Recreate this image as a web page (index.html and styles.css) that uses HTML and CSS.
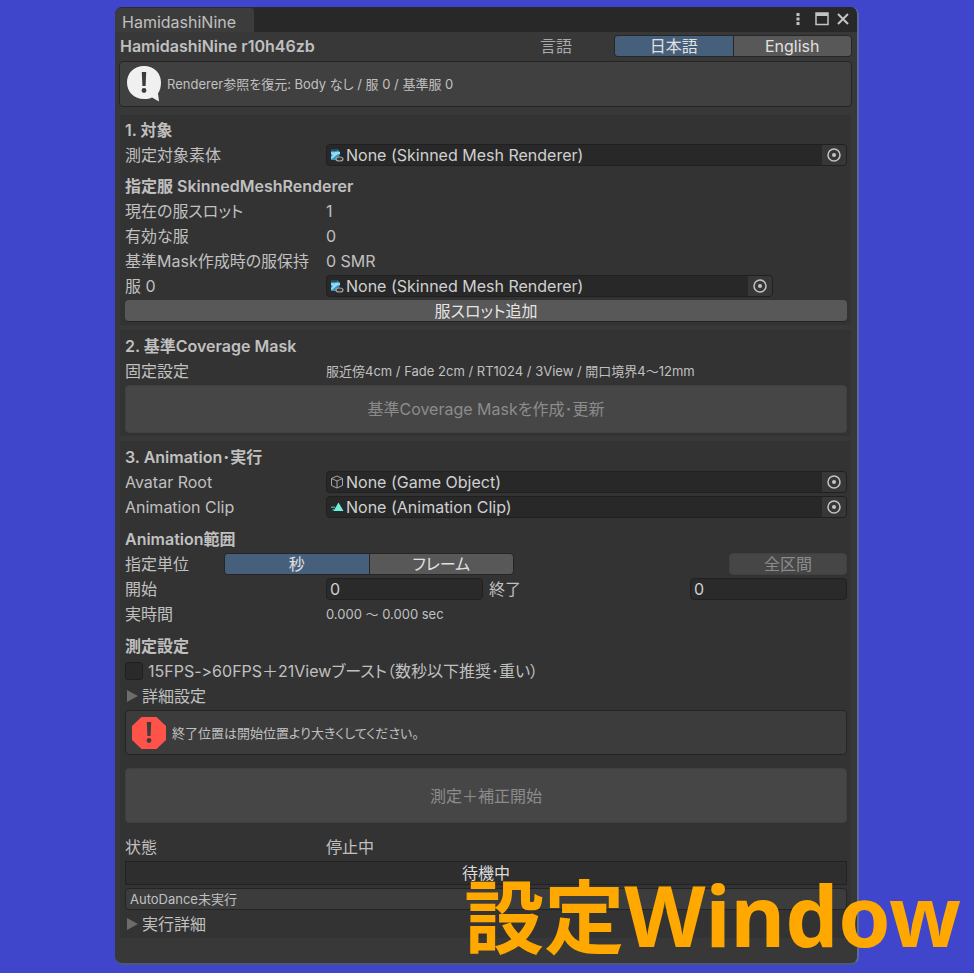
FILE: index.html
```html
<!DOCTYPE html>
<html lang="ja">
<head>
    <meta charset="utf-8">
    <meta name="viewport" content="width=device-width, initial-scale=1">
    <title>HamidashiNine</title>
    <link rel="stylesheet" href="styles.css">
</head>
<body>
    <!-- shared icons -->
    <svg class="sprite" aria-hidden="true">
        <symbol id="picker" viewBox="0 0 16 16">
            <circle cx="8" cy="8" r="6" fill="none" stroke="#c4c4c4" stroke-width="1.5"/>
            <circle cx="8" cy="8" r="2" fill="#c4c4c4"/>
        </symbol>
        <symbol id="mesh" viewBox="0 0 14 14">
            <path d="M1 1h6l3 3v2L7 12H1z" fill="#3a8fb5"/>
            <path d="M1 4c4 1 5-1 9 0v2C6 6 6 9 1 11V9c2-1 2-3 0-3z" fill="#8edcf8"/>
            <path d="M1 1h6v2H1z" fill="#2c4a58"/>
            <ellipse cx="9.500" cy="11" rx="3.500" ry="2" fill="#333" stroke="#a4a4a4" stroke-width="1.200"/>
        </symbol>
    </svg>

    <div class="window">
        <header class="titlebar">
            <span class="tab">HamidashiNine</span>
            <div class="window-buttons">
                <button type="button" aria-label="メニュー">
                    <svg width="6" height="14" viewBox="0 0 6 14"><path d="M1.500 1h3v3h-3zM1.500 5.500h3v3h-3zM1.500 10h3v3h-3z" fill="#c4c4c4"/></svg>
                </button>
                <button type="button" aria-label="最大化">
                    <svg width="14" height="14" viewBox="0 0 14 14"><path d="M1 1h12v11.500H1z" fill="none" stroke="#c4c4c4" stroke-width="1.500"/><path d="M1 1h12v3H1z" fill="#c4c4c4"/></svg>
                </button>
                <button type="button" aria-label="閉じる">
                    <svg width="12" height="14" viewBox="0 0 12 14"><path d="M1 2l10 10M11 2L1 12" stroke="#c4c4c4" stroke-width="2"/></svg>
                </button>
            </div>
        </header>

        <main>
            <div class="toolbar">
                <h1>HamidashiNine r10h46zb</h1>
                <span class="lang-label">言語</span>
                <div class="segment lang">
                    <button type="button" class="active">日本語</button>
                    <button type="button">English</button>
                </div>
            </div>

            <div class="help info">
                <svg width="36" height="36" viewBox="0 0 36 36">
                    <path d="M18 0C8 0 1 7 1 16.500S8 33 18 33c3 0 6-.5 8-1.500l7 4-1-8c2-3 3-7 3-11C35 7 28 0 18 0z" fill="#f0f0f0"/>
                    <path d="M15.800 6h4.400l-.6 14h-3.200z" fill="#3c3c3c"/>
                    <circle cx="18" cy="24.500" r="2.400" fill="#3c3c3c"/>
                </svg>
                <p>Renderer参照を復元: Body なし / 服 0 / 基準服 0</p>
            </div>

            <section>
                <h2>1. 対象</h2>
                <div class="row">
                    <label for="body">測定対象素体</label>
                    <div class="object-field">
                        <svg width="14" height="14"><use href="#mesh"/></svg>
                        <input id="body" type="text" value="None (Skinned Mesh Renderer)" readonly>
                        <button type="button" aria-label="選択"><svg width="16" height="16"><use href="#picker"/></svg></button>
                    </div>
                </div>
                <h3>指定服 SkinnedMeshRenderer</h3>
                <div class="row"><span>現在の服スロット</span><span>1</span></div>
                <div class="row"><span>有効な服</span><span>0</span></div>
                <div class="row"><span>基準Mask作成時の服保持</span><span>0 SMR</span></div>
                <div class="row">
                    <label for="cloth">服 0</label>
                    <div class="object-field slot">
                        <svg width="14" height="14"><use href="#mesh"/></svg>
                        <input id="cloth" type="text" value="None (Skinned Mesh Renderer)" readonly>
                        <button type="button" aria-label="選択"><svg width="16" height="16"><use href="#picker"/></svg></button>
                    </div>
                </div>
                <button type="button" class="btn">服スロット追加</button>
            </section>

            <section>
                <h2>2. 基準Coverage Mask</h2>
                <div class="row"><span>固定設定</span><span class="small">服近傍4cm / Fade 2cm / RT1024 / 3View / 開口境界4～12mm</span></div>
                <button type="button" class="btn big" disabled>基準Coverage Maskを作成･更新</button>
            </section>

            <section class="run">
                <h2>3. Animation･実行</h2>
                <div class="row">
                    <label for="avatar">Avatar Root</label>
                    <div class="object-field">
                        <svg width="14" height="14" viewBox="0 0 14 14"><path d="M7 1l5.500 2.500v7L7 13l-5.500-2.500v-7zM1.500 3.500L7 6l5.500-2.500M7 6v7" fill="none" stroke="#a8a8a8"/></svg>
                        <input id="avatar" type="text" value="None (Game Object)" readonly>
                        <button type="button" aria-label="選択"><svg width="16" height="16"><use href="#picker"/></svg></button>
                    </div>
                </div>
                <div class="row">
                    <label for="clip">Animation Clip</label>
                    <div class="object-field">
                        <svg width="14" height="14" viewBox="0 0 14 14"><path d="M8.500 2.500L13.500 11H3.500z" fill="#6ff0d8"/><path d="M1 6.500h4v1.500H1zM2.500 9H4v1.500H2.500z" fill="#3f9f90"/></svg>
                        <input id="clip" type="text" value="None (Animation Clip)" readonly>
                        <button type="button" aria-label="選択"><svg width="16" height="16"><use href="#picker"/></svg></button>
                    </div>
                </div>

                <h3>Animation範囲</h3>
                <div class="row unit">
                    <span>指定単位</span>
                    <div class="segment">
                        <button type="button" class="active">秒</button>
                        <button type="button">フレーム</button>
                    </div>
                    <button type="button" class="btn all" disabled>全区間</button>
                </div>
                <div class="range">
                    <div class="row"><label for="start">開始</label><input id="start" class="number" type="text" value="0"></div>
                    <div class="row"><label for="end">終了</label><input id="end" class="number" type="text" value="0"></div>
                </div>
                <div class="row"><span>実時間</span><span class="small">0.000 ～ 0.000 sec</span></div>

                <h3>測定設定</h3>
                <div class="check">
                    <input id="boost" type="checkbox">
                    <label for="boost">15FPS-&gt;60FPS＋21Viewブースト（数秒以下推奨･重い）</label>
                </div>
                <details>
                    <summary>詳細設定</summary>
                </details>
                <div class="help error">
                    <svg width="36" height="34" viewBox="0 0 36 34">
                        <path d="M10.500 1h15L35 10v14l-9.500 9h-15L1 24V10z" fill="#ff534a"/>
                        <path d="M15.800 6h4.400l-.6 14h-3.200z" fill="#3c3c3c"/>
                        <circle cx="18" cy="24.500" r="2.400" fill="#3c3c3c"/>
                    </svg>
                    <p>終了位置は開始位置より大きくしてください。</p>
                </div>
                <button type="button" class="btn start" disabled>測定＋補正開始</button>
                <div class="row"><span>状態</span><span>停止中</span></div>
                <div class="progress">待機中</div>
                <div class="status">AutoDance未実行</div>
                <details>
                    <summary>実行詳細</summary>
                </details>
            </section>
        </main>
    </div>

    <p class="caption"><span>設定</span>Window</p>
</body>
</html>
```
FILE: styles.css
```css
* {
    box-sizing: border-box;
}
body {
    position: relative;
    margin: 0;
    padding: 7px 115px 8px;
    background: #3f46cc;
    color: #c0c0c0;
    font-family: Inter, "Noto Sans CJK JP", sans-serif;
    font-size: 16px;
    line-height: 22px;
    font-feature-settings: "palt", "calt" 0;
}
h1, h2, h3, p {
    margin: 0;
    font-size: 16px;
}
h1, h2, h3 {
    font-weight: 600;
}
button, input {
    margin: 0;
    padding: 0;
    border: 0;
    background: none;
    color: inherit;
    font: inherit;
    font-feature-settings: inherit;
}
svg {
    display: block;
    flex: none;
}
.sprite {
    position: absolute;
    width: 0;
    height: 0;
}
.window {
    border-right: 2px solid #5a6a9c;
    border-bottom: 2px solid #4c5878;
    border-radius: 8px;
    background: #383838;
    overflow: hidden;
}

/* title bar */
.titlebar {
    display: flex;
    justify-content: space-between;
    height: 25px;
    background: #282828;
}
.tab {
    padding: 3px 18px 0 7px;
    border-top: 1px solid #2c2c2c;
    border-radius: 6px 4px 0 0;
    background: #3c3c3c;
}
.window-buttons {
    display: flex;
    align-items: center;
    gap: 8px;
    padding: 0 8px 2px 0;
}
.window-buttons button:first-child {
    margin-right: 6px;
}
main {
    padding: 2px 5px 25px 4px;
}
.toolbar {
    display: flex;
    align-items: center;
    height: 24px;
    margin-bottom: 3px;
}
.toolbar h1 {
    flex: 1;
    padding-left: 1px;
}
.lang-label {
    width: 74px;
    color: #aaa;
}

/* buttons */
.segment {
    display: flex;
    border: 1px solid #262626;
    border-radius: 4px;
    background: #262626;
    gap: 1px;
    overflow: hidden;
}
.segment button {
    flex: 1;
    height: 20px;
    line-height: 20px;
    background: #585858;
    color: #e0e0e0;
}
.segment .active {
    background: #46607c;
}
.lang {
    width: 238px;
}
.btn {
    display: block;
    width: 100%;
    height: 22px;
    border-bottom: 1px solid #242424;
    border-radius: 4px;
    background: #585858;
    color: #e4e4e4;
    line-height: 20px;
}
.btn:disabled {
    border: 1px solid #404040;
    background: #464646;
    color: #8c8c8c;
}
.big {
    height: 48px;
}

/* message boxes */
.help {
    display: flex;
    align-items: center;
    height: 46px;
    padding-left: 6px;
    gap: 5px;
    border: 1px solid #242424;
    border-radius: 4px;
    background: #404040;
}
.help p, .small, .status {
    font-size: 13px;
}
.info {
    margin-bottom: 8px;
}
.error {
    height: 45px;
    padding-left: 5px;
    background: #3c3c3c;
}

/* sections */
section {
    display: flex;
    flex-direction: column;
    gap: 3px;
    margin: 0 1px 5px;
    padding: 4px 4px 3px 5px;
    background: #333;
}
section + section {
    padding-top: 5px;
}
section:last-child {
    margin-bottom: 0;
}
h3 {
    margin-top: 6px;
}
.run h3 {
    margin-top: 7px;
}
.row {
    display: grid;
    grid-template-columns: 201px 1fr;
    align-items: center;
    height: 22px;
}
.object-field {
    display: flex;
    align-items: center;
    height: 22px;
    padding-left: 3px;
    border: 1px solid #202020;
    border-radius: 4px;
    background: #282828;
    color: #d0d0d0;
    overflow: hidden;
}
.object-field input {
    flex: 1;
    min-width: 0;
    height: 20px;
    padding-left: 2px;
}
.object-field button {
    display: flex;
    align-items: center;
    justify-content: center;
    width: 24px;
    height: 20px;
    background: #373737;
}
.slot {
    margin-right: 74px;
}
.unit {
    grid-template-columns: 99px 290px 1fr;
}
.all {
    width: 118px;
    justify-self: end;
}
.range {
    display: grid;
    grid-template-columns: 1fr 1fr;
    gap: 6px;
}
.number {
    min-width: 0;
    height: 22px;
    padding-left: 3px;
    border: 1px solid #202020;
    border-radius: 4px;
    background: #2a2a2a;
    color: #d0d0d0;
}
.check {
    display: flex;
    align-items: center;
    gap: 5px;
    height: 22px;
}
.check input {
    appearance: none;
    width: 18px;
    height: 18px;
    border: 1px solid #202020;
    border-radius: 3px;
    background: #2a2a2a;
}
summary {
    display: flex;
    align-items: center;
    gap: 4px;
    padding-left: 2px;
    list-style: none;
}
summary::before {
    content: "";
    border-left: 11px solid #6c6c6c;
    border-top: 6px solid transparent;
    border-bottom: 6px solid transparent;
}
.start {
    height: 55px;
    margin: 10px 0;
}
.progress {
    height: 24px;
    border: 1px solid #222;
    background: #2e2e2e;
    color: #dcdcdc;
    line-height: 22px;
    text-align: center;
}
.status {
    height: 22px;
    padding-left: 4px;
    border: 1px solid #242424;
    border-radius: 4px;
    background: #3c3c3c;
    line-height: 20px;
}

/* big caption over the lower right corner */
.caption {
    position: absolute;
    right: 13px;
    bottom: 12px;
    color: #ffa900;
    font-family: "Noto Sans", "Noto Sans CJK JP", sans-serif;
    font-size: 84px;
    font-weight: 700;
    line-height: 90px;
    white-space: nowrap;
}
.caption span {
    font-size: 80px;
}
```
